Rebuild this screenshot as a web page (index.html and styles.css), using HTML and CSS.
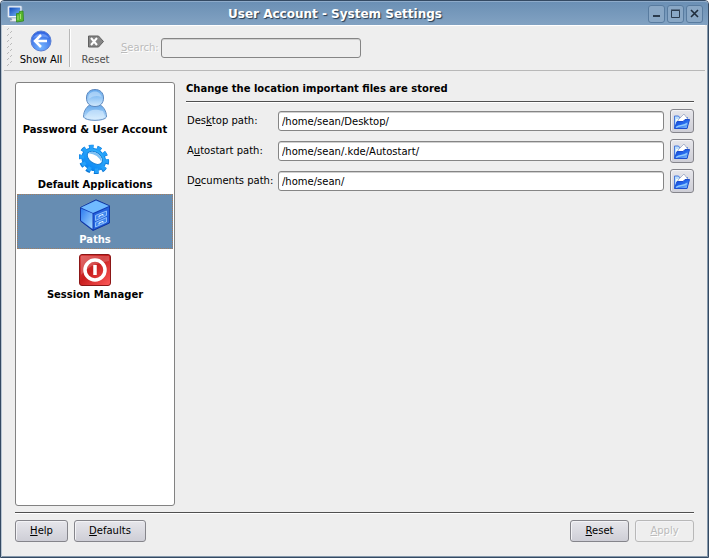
FILE: index.html
```html
<!DOCTYPE html>
<html lang="en">
<head>
<meta charset="utf-8">
<title>User Account - System Settings</title>
<link rel="stylesheet" href="styles.css">
</head>
<body>
<svg class="defs" aria-hidden="true">
  <defs>
    <linearGradient id="screen" x1="0" y1="0" x2="1" y2="1"><stop offset="0" stop-color="#0b47b8"/><stop offset="1" stop-color="#7db8f5"/></linearGradient>
    <linearGradient id="person" x1="0" y1="0" x2="0" y2="1"><stop offset="0" stop-color="#62a6ea"/><stop offset=".5" stop-color="#94c6f5"/><stop offset="1" stop-color="#d3eafd"/></linearGradient>
    <linearGradient id="gear" x1="0" y1="0" x2="0" y2="1"><stop offset="0" stop-color="#35b3fb"/><stop offset="1" stop-color="#0a86f5"/></linearGradient>
    <linearGradient id="cube" x1="0" y1="0" x2="1" y2="1"><stop offset="0" stop-color="#2e7cf0"/><stop offset="1" stop-color="#a4d8ff"/></linearGradient>
    <linearGradient id="red" x1="0" y1="0" x2="1" y2="1"><stop offset="0" stop-color="#dc4444"/><stop offset=".45" stop-color="#c81e1e"/><stop offset="1" stop-color="#ff5a5a"/></linearGradient>
    <radialGradient id="ball" cx=".5" cy=".8" r=".8"><stop offset="0" stop-color="#74b4ff"/><stop offset="1" stop-color="#2d5fe0"/></radialGradient>
    <linearGradient id="folder" x1="0" y1="0" x2="1" y2="1"><stop offset="0" stop-color="#0c3fd8"/><stop offset=".5" stop-color="#2468ec"/><stop offset="1" stop-color="#9cd4ff"/></linearGradient>
    <symbol id="open-folder" viewBox="0 0 18 18">
      <path d="M1.500 16V4h4l1 1.500h8V16z" fill="#b9dcfa" stroke="#4878dc"/>
      <path d="M3 13V7h3v5" fill="#eef8ff"/>
      <path d="M5 8l6-6 4 5.500L13 12H5z" fill="#fff" stroke="#9aa6c4" stroke-width=".8"/>
      <path d="M1.500 16.500L4 9.500h6l2-2h4.500l-2.500 9z" fill="url(#folder)" stroke="#1d4fd0"/>
      <path d="M3 15.500c4-3 8-1 11-4" fill="none" stroke="#8fcaff" stroke-width="1.500"/>
    </symbol>
  </defs>
</svg>
<div class="window">
  <header class="titlebar">
    <svg class="app-icon" width="18" height="18" viewBox="0 0 18 18" aria-hidden="true">
      <path d="M4 13h6v2h2v1.500H3V15h2z" fill="#e6eaf0" stroke="#8a96a8" stroke-width=".5"/>
      <rect x=".8" y="1" width="14" height="11.500" rx="1" fill="#f4f7fb" stroke="#a8bdd6" stroke-width=".7"/>
      <rect x="2.300" y="2.500" width="11" height="8.500" fill="url(#screen)"/>
      <path d="M9.500 8.500h2.500l.5-2 3.500-.5.500 10-7 1z" fill="#58b82e" stroke="#2d851a" stroke-width=".8"/>
      <path d="M11 10.500v4.500M13.500 9v5" fill="none" stroke="#a5e070"/>
    </svg>
    <h1 class="title">User Account - System Settings</h1>
    <div class="window-controls">
      <button class="window-button" aria-label="Minimize"><svg width="9" height="9" viewBox="0 0 9 9"><path d="M1 7h7" stroke="#2b3b4d" stroke-width="2"/></svg></button>
      <button class="window-button" aria-label="Maximize"><svg width="9" height="9" viewBox="0 0 9 9"><path d="M.5 1.500h8v7h-8zM0 1h9" fill="none" stroke="#2b3b4d"/></svg></button>
      <button class="window-button" aria-label="Close"><svg width="9" height="9" viewBox="0 0 9 9"><path d="M1 1l7 7M8 1L1 8" stroke="#1f2d3d" stroke-width="1.600"/></svg></button>
    </div>
  </header>
  <div class="toolbar">
    <svg class="grip" width="6" height="40" viewBox="0 0 6 40" aria-hidden="true">
      <path d="M0 2l2-2M3 5l2-2M0 8l2-2M3 11l2-2M0 14l2-2M3 17l2-2M0 20l2-2M3 23l2-2M0 26l2-2M3 29l2-2M0 32l2-2M3 35l2-2M0 38l2-2" stroke="#bbb" fill="none"/>
    </svg>
    <button class="tool show-all">
      <svg width="22" height="22" viewBox="0 0 22 22" aria-hidden="true">
        <circle cx="11" cy="11" r="10" fill="url(#ball)" stroke="#5b80d4"/>
        <path d="M3 8a9 8 0 0 1 16 0q-8-3-16 0z" fill="#8db5ff" opacity=".5"/>
        <path d="M11 5l-6 6 6 6M6 11h11" fill="none" stroke="#fff" stroke-width="2.500"/>
      </svg>
      <span>Show All</span>
    </button>
    <span class="tool-divider"></span>
    <button class="tool reset-tool">
      <svg width="22" height="22" viewBox="0 0 22 22" aria-hidden="true">
        <path d="M3.500 6h10l5 5.500-5 5.500h-10z" fill="#858585" stroke="#606060"/>
        <path d="M6 8l6 7M12 8l-6 7" stroke="#fff" stroke-width="2"/>
      </svg>
      <span>Reset</span>
    </button>
    <label class="search-label" for="search"><u>S</u>earch:</label>
    <input class="field search" id="search" type="text" disabled>
  </div>
  <div class="content">
    <nav class="sidebar" aria-label="Modules">
      <a class="module" href="#account">
        <svg width="32" height="32" viewBox="0 0 32 32" aria-hidden="true">
          <path d="M4.500 28c0-7 4-11 7-12.500h9c3 1.500 7 5.500 7 12.500-2 4.500-21 4.500-23 0z" fill="url(#person)" stroke="#6590c3"/>
          <path d="M16 .5c5 0 8.500 3 8.500 8.500 0 5-3 8.500-8.500 8.500S7.500 14 7.500 9C7.500 3.500 11 .5 16 .5z" fill="url(#person)" stroke="#5c88bf"/>
          <path d="M9.500 7c1-5 11-7 13 1q-7-3-13 2z" fill="#c5e1fc" opacity=".6"/>
          <path d="M8 25c3-5 8-5 16-3l2 6c-5 3-15 3-20 0z" fill="#e2f3ff" opacity=".55"/>
        </svg>
        <span>Password &amp; User Account</span>
      </a>
      <a class="module" href="#applications">
        <svg width="32" height="32" viewBox="0 0 32 32" aria-hidden="true">
          <g transform="rotate(35 15 15)">
            <ellipse cx="15" cy="15.500" rx="13.500" ry="11.500" pathLength="100" fill="none" stroke="#0a78d8" stroke-width="5" stroke-dasharray="5.500 4.500"/>
            <ellipse cx="15" cy="15.500" rx="12.500" ry="10.500" fill="url(#gear)" stroke="#0e84e4"/>
            <ellipse cx="15" cy="15" rx="13" ry="11" pathLength="100" fill="none" stroke="#25a0f9" stroke-width="4.500" stroke-dasharray="5 5"/>
            <ellipse cx="15" cy="13.500" rx="8.500" ry="5.500" fill="#fff" stroke="#1780d8"/>
            <path d="M7 13.500q2-5 8-5 6 0 8 5-7-5-16 0z" fill="#7cc0f4"/>
          </g>
        </svg>
        <span>Default Applications</span>
      </a>
      <a class="module selected" href="#paths" aria-current="page">
        <svg width="32" height="32" viewBox="0 0 32 32" aria-hidden="true">
          <path d="M1.500 8.500L17 .8l13.500 6V24L14 31.500 1.500 22z" fill="#123bb4" stroke="#1238a0"/>
          <path d="M2 8.500L17 1.500l13 5.500-16 7z" fill="#70baff"/>
          <path d="M2 9.500l11.500 5V30L2 21.500z" fill="url(#cube)"/>
          <path d="M14.500 15L30 8v15.500L14.500 30.500z" fill="#2463dd"/>
          <path d="M16.500 16.500l11-4.500v4.500l-11 5zM16.500 23.500l11-5v4.500l-11 5z" fill="#3f86ee" stroke="#a6d2ff" stroke-width=".8"/>
          <path d="M20 18.500v-1.500l4-1.700v1.500M20 25.500v-1.500l4-1.700v1.500" fill="none" stroke="#e4f3ff"/>
        </svg>
        <span>Paths</span>
      </a>
      <a class="module" href="#session">
        <svg width="32" height="32" viewBox="0 0 32 32" aria-hidden="true">
          <rect x=".5" y=".5" width="31" height="31" rx="2.500" fill="url(#red)" stroke="#8c1717"/>
          <path d="M2 2h28v5Q12 9 2 21z" fill="#fff" opacity=".2"/>
          <circle cx="16" cy="16" r="10" fill="none" stroke="#fff" stroke-width="3.500"/>
          <path d="M16 11v10" stroke="#fff" stroke-width="3.500"/>
        </svg>
        <span>Session Manager</span>
      </a>
    </nav>
    <main class="panel">
      <h2 class="heading">Change the location important files are stored</h2>
      <form class="paths">
        <label for="desktop">Des<u>k</u>top path:</label>
        <input class="field" id="desktop" type="text" value="/home/sean/Desktop/">
        <button class="button browse" type="button" aria-label="Browse for desktop path"><svg width="18" height="18" aria-hidden="true"><use href="#open-folder"/></svg></button>
        <label for="autostart">A<u>u</u>tostart path:</label>
        <input class="field" id="autostart" type="text" value="/home/sean/.kde/Autostart/">
        <button class="button browse" type="button" aria-label="Browse for autostart path"><svg width="18" height="18" aria-hidden="true"><use href="#open-folder"/></svg></button>
        <label for="documents">D<u>o</u>cuments path:</label>
        <input class="field" id="documents" type="text" value="/home/sean/">
        <button class="button browse" type="button" aria-label="Browse for documents path"><svg width="18" height="18" aria-hidden="true"><use href="#open-folder"/></svg></button>
      </form>
    </main>
  </div>
  <footer class="actions">
    <button class="button"><u>H</u>elp</button>
    <button class="button wide"><u>D</u>efaults</button>
    <span class="spacer"></span>
    <button class="button confirm"><u>R</u>eset</button>
    <button class="button confirm" disabled><u>A</u>pply</button>
  </footer>
</div>
</body>
</html>
```
FILE: styles.css
```css
* {
  box-sizing: border-box;
}

body {
  margin: 0;
  background: #fff;
  color: #000;
  font: 10px/14px "DejaVu Sans", sans-serif;
}

button,
input {
  margin: 0;
  color: inherit;
  font: inherit;
}

svg {
  display: block;
}

u {
  text-underline-offset: 1px;
}

.defs {
  position: absolute;
  width: 0;
  height: 0;
}

.window {
  display: flex;
  flex-direction: column;
  min-height: 100vh;
  border: 1px solid #344a63;
  border-radius: 4px 4px 0 0;
  background: #eee;
  box-shadow: inset 1px 0 #b8c5d2, inset -1px -1px #8598ab;
}

.titlebar {
  display: grid;
  grid-template-columns: 20px 1fr 60px;
  align-items: center;
  height: 24px;
  padding: 0 5px 0 6px;
  border-top: 1px solid #8eabca;
  border-radius: 3px 3px 0 0;
  background: linear-gradient(#6b90b5, #82a2c2);
}

.title {
  margin: 0;
  color: #fff;
  font-size: 12px;
  line-height: 16px;
  text-align: center;
  text-shadow: 1px 1px 1px #24384d;
}

.window-controls {
  display: flex;
  justify-content: flex-end;
  gap: 2px;
}

.window-button {
  display: grid;
  place-items: center;
  width: 17px;
  height: 18px;
  padding: 0;
  border: 1px solid #587b9f;
  border-radius: 3px;
  background: #89a7c5;
}

.toolbar {
  display: flex;
  align-items: center;
  height: 46px;
  margin: 0 3px;
  border-top: 1px solid #fff;
  border-bottom: 1px solid #b8b8b8;
}

.grip {
  margin-left: 3px;
}

.tool {
  display: flex;
  flex-direction: column;
  align-items: center;
  gap: 1px;
  padding: 0;
  border: 0;
  background: none;
}

.show-all {
  width: 56px;
}

.reset-tool {
  width: 49px;
  color: #505050;
}

.tool-divider {
  width: 2px;
  height: 38px;
  border-left: 1px solid #b8b8b8;
  background: #fff;
}

.search-label {
  margin: 0 2px 0 1px;
  color: #bbb;
  text-shadow: 1px 1px #fff;
}

.field {
  width: 100%;
  min-width: 0;
  height: 20px;
  padding: 1px 3px 0;
  border: 1px solid #858585;
  border-radius: 3px;
  background: #fff;
  box-shadow: inset 0 1px #d0d0d0;
}

.search {
  width: 200px;
  background: #eee;
}

.content {
  display: flex;
  flex: 1;
  gap: 11px;
  margin: 11px 14px 0;
}

.sidebar {
  flex: 0 0 160px;
  padding: 1px;
  border: 1px solid #828282;
  border-radius: 3px;
  background: #fff;
}

.module {
  display: flex;
  flex-direction: column;
  align-items: center;
  gap: 2px;
  height: 55px;
  padding-top: 4px;
  border: 1px solid transparent;
  color: #000;
  font-weight: bold;
  text-decoration: none;
  white-space: nowrap;
}

.selected {
  border: 1px dotted #a47f60;
  background: #678db2;
  color: #fff;
}

.panel {
  flex: 1;
  min-width: 0;
}

.heading {
  margin: 0 0 7px;
  padding-bottom: 5px;
  border-bottom: 1px solid #505050;
  box-shadow: 0 1px #fff;
  font-size: 10px;
  line-height: 14px;
}

.paths {
  display: grid;
  grid-template-columns: 85px 1fr 24px;
  align-items: center;
  gap: 6px;
  padding-left: 1px;
  white-space: nowrap;
}

.button {
  min-width: 53px;
  height: 22px;
  padding: 0 6px;
  border: 1px solid #85858b;
  border-radius: 3px;
  background: linear-gradient(#e6e6eb, #ceced6);
  box-shadow: inset 1px 1px #f3f3f6;
}

.button:disabled {
  border-color: #b8b8b8;
  background: #eee;
  color: #bbb;
  text-shadow: 1px 1px #fff;
}

.browse {
  display: grid;
  place-items: center;
  min-width: 24px;
  height: 24px;
  padding: 0;
}

.wide {
  min-width: 72px;
}

.confirm {
  min-width: 59px;
}

.actions {
  display: flex;
  gap: 6px;
  margin: 6px 14px 15px;
  padding-top: 7px;
  border-top: 1px solid #505050;
  box-shadow: inset 0 1px #fff;
}

.spacer {
  flex: 1;
}
```
